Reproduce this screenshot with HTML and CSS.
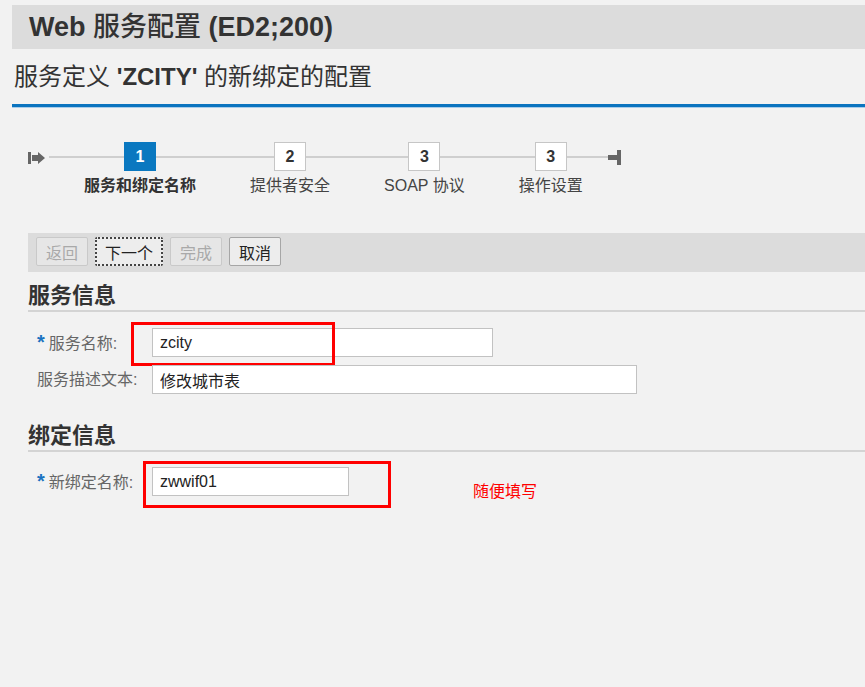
FILE: index.html
```html
<!DOCTYPE html>
<html lang="zh-CN">
<head>
    <meta charset="UTF-8">
    <meta name="viewport" content="width=device-width, initial-scale=1.0">
    <title>Web 服务配置</title>
    <link rel="stylesheet" href="styles.css">
</head>
<body>
    <div class="titlebar"><b>Web</b> <span class="title-cjk">服务配置</span> <b>(ED2;200)</b></div>
    <div class="subtitle">服务定义 <b>'ZCITY'</b> 的新绑定的配置</div>

    <div class="roadmap">
        <svg class="rm-start" width="17" height="12" viewBox="0 0 17 12">
            <rect x="0" y="0" width="3" height="12" fill="#666"/>
            <polygon points="4,3 10,3 10,0 17,6 10,12 10,9 4,9" fill="#666"/>
        </svg>
        <div class="step active">
            <div class="step-num">1</div>
            <div class="step-label">服务和绑定名称</div>
        </div>
        <div class="step">
            <div class="step-num">2</div>
            <div class="step-label">提供者安全</div>
        </div>
        <div class="step">
            <div class="step-num">3</div>
            <div class="step-label">SOAP 协议</div>
        </div>
        <div class="step">
            <div class="step-num">3</div>
            <div class="step-label">操作设置</div>
        </div>
        <svg class="rm-end" width="13" height="15" viewBox="0 0 13 15">
            <rect x="0" y="5" width="10" height="5" fill="#666"/>
            <rect x="9" y="0" width="4" height="15" fill="#666"/>
        </svg>
    </div>

    <div class="toolbar">
        <button class="btn" disabled>返回</button>
        <button class="btn focused">下一个</button>
        <button class="btn" disabled>完成</button>
        <button class="btn">取消</button>
    </div>

    <div class="section">
        <h2 class="group-title">服务信息</h2>
        <div class="row first">
            <label class="field-label"><span class="req">*</span>服务名称:</label>
            <input class="field w-name" type="text" value="zcity">
            <div class="mark mark-name"></div>
        </div>
        <div class="row">
            <label class="field-label">服务描述文本:</label>
            <input class="field w-desc" type="text" value="修改城市表">
        </div>
    </div>

    <div class="section second">
        <h2 class="group-title">绑定信息</h2>
        <div class="row first">
            <label class="field-label"><span class="req">*</span>新绑定名称:</label>
            <input class="field w-bind" type="text" value="zwwif01">
            <span class="note">随便填写</span>
            <div class="mark mark-bind"></div>
        </div>
    </div>
</body>
</html>
```

FILE: styles.css
```css
body {
    margin: 0;
    min-height: 687px;
    background-color: #f2f2f2;
    font-family: "Liberation Sans", "Noto Sans CJK SC", sans-serif;
    color: #333;
}

.titlebar {
    margin: 5px 0 0 12px;
    height: 44px;
    line-height: 44px;
    padding-left: 17px;
    background-color: #dcdcdc;
    font-size: 27px;
    color: #333;
}

.title-cjk {
    font-weight: 500;
}

.subtitle {
    margin-left: 12px;
    padding-left: 2px;
    height: 55px;
    line-height: 55px;
    font-size: 24px;
    color: #333;
    border-bottom: 3px solid #0b74bf;
    box-shadow: 0 1px 0 #a9cdea;
}

/* roadmap */
.roadmap {
    position: relative;
    box-sizing: border-box;
    height: 126px;
    margin-left: 28px;
    padding-top: 35px;
    display: flex;
    align-items: flex-start;
}

.roadmap::before {
    content: '';
    position: absolute;
    left: 21px;
    top: 49px;
    width: 559px;
    height: 2px;
    background-color: #cfcfcf;
}

.rm-start {
    margin-top: 10px;
    position: relative;
}

.rm-end {
    margin-top: 8px;
    margin-left: 25px;
    position: relative;
}

.step {
    display: flex;
    flex-direction: column;
    align-items: center;
    margin-left: 54px;
}

.rm-start + .step {
    margin-left: 39px;
}

.step-num {
    position: relative;
    box-sizing: border-box;
    width: 32px;
    height: 29px;
    line-height: 27px;
    text-align: center;
    background-color: #fff;
    border: 1px solid #c6c6c6;
    font-size: 16px;
    font-weight: bold;
    color: #333;
}

.step.active .step-num {
    background-color: #0a78c0;
    border-color: #0a78c0;
    color: #fff;
}

.step-label {
    margin-top: 5px;
    line-height: 20px;
    font-size: 16px;
    color: #444;
    white-space: nowrap;
}

.step.active .step-label {
    font-weight: bold;
    color: #333;
}

/* toolbar */
.toolbar {
    margin-left: 28px;
    height: 39px;
    box-sizing: border-box;
    padding: 4px 8px;
    background-color: #dcdcdc;
    display: flex;
    gap: 7px;
    align-items: flex-start;
}

.btn {
    height: 29px;
    padding: 0 9px;
    font-family: "Liberation Sans", "Noto Sans CJK SC", sans-serif;
    font-size: 16px;
    color: #222;
    background-color: #ededed;
    border: 1px solid #a6a6a6;
    border-radius: 2px;
}

.btn:disabled {
    color: #a9a9a9;
    background-color: #e6e6e6;
    border-color: #c9c9c9;
}

.btn.focused {
    border: 2px dotted #444;
    padding: 0 8px;
}

/* form groups */
.section {
    margin-left: 28px;
}

.section.second {
    margin-top: 18px;
}

.group-title {
    margin: 0;
    padding-top: 10px;
    line-height: 28px;
    font-size: 22px;
    font-weight: bold;
    color: #333;
    border-bottom: 2px solid #d4d4d4;
}

.row {
    position: relative;
    margin-left: 9px;
    margin-top: 7px;
    display: flex;
    align-items: flex-start;
}

.row.first {
    margin-top: 16px;
}

.section.second .row.first {
    margin-top: 15px;
}

.field-label {
    width: 115px;
    line-height: 29px;
    font-size: 16px;
    color: #666;
    white-space: nowrap;
}

.req {
    color: #1a73c1;
    font-size: 20px;
    font-weight: bold;
    margin-right: 4px;
}

.field {
    box-sizing: border-box;
    height: 29px;
    padding: 0 7px;
    border: 1px solid #c2c2c2;
    background-color: #fff;
    font-family: "Liberation Sans", "Noto Sans CJK SC", sans-serif;
    font-size: 16px;
    color: #222;
    outline: none;
}

.w-name { width: 341px; }
.w-desc { width: 485px; }
.w-bind { width: 197px; }

.note {
    margin-left: 124px;
    margin-top: 15px;
    line-height: 20px;
    font-size: 16px;
    color: #f00;
}

/* red annotation boxes */
.mark {
    position: absolute;
    box-sizing: border-box;
    border: 3px solid #f00;
}

.mark-name {
    left: 94px;
    top: -6px;
    width: 204px;
    height: 44px;
}

.mark-bind {
    left: 106px;
    top: -6px;
    width: 248px;
    height: 47px;
}
```
